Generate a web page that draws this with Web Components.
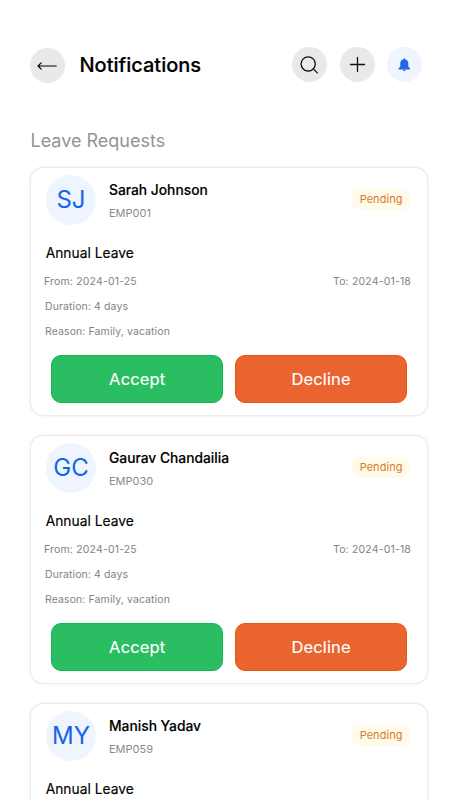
<!DOCTYPE html>
<html lang="en">
<head>
<meta charset="utf-8">
<title>Notifications</title>
<style>
html,body{margin:0;height:800px;overflow:hidden;background:#fff}
body{font-family:Inter,"Liberation Sans",sans-serif;color:#000}
</style>
</head>
<body>
<notifications-page></notifications-page>
<script>
const define = (name, html, setup) => {
  const t = document.createElement('template');
  t.innerHTML = html;
  customElements.define(name, class extends HTMLElement {
    constructor() {
      super();
      this.attachShadow({mode: 'open'}).append(t.content.cloneNode(true));
    }
    connectedCallback() { if (setup) setup(this, this.shadowRoot); }
  });
};

define('icon-button', `<style>
:host{display:flex;width:35px;height:35px;border-radius:50%;background:#e9e9e9;align-items:center;justify-content:center;flex:none}
:host([tone=blue]){background:#eef5ff}
::slotted(svg){display:block}
</style><slot></slot>`);

define('top-bar', `<style>
:host{display:flex;align-items:center;height:36px;padding:47px 27.8px 0 30.4px}
h1{margin:0 0 0 14.1px;font-size:20px;font-weight:500;line-height:36px;flex:1;-webkit-text-stroke:.2px #000}
.actions{display:flex;gap:12.7px;margin-top:-1px}
</style>
<icon-button><svg width="35" height="35" viewBox="0 0 35 35" fill="none" stroke="#000" stroke-width="1.1" stroke-linecap="round" stroke-linejoin="round"><path d="M26.3 18H8M11.2 14.9L8 18l3.2 3.2"/></svg></icon-button>
<h1><slot></slot></h1>
<div class="actions">
<icon-button><svg width="35" height="35" viewBox="0 0 35 35" fill="none" stroke="#111" stroke-width="1.3" stroke-linecap="round"><circle cx="16.2" cy="16.9" r="7.1"/><path d="M21.3 21.9l4 4"/></svg></icon-button>
<icon-button><svg width="35" height="35" viewBox="0 0 35 35" fill="none" stroke="#111" stroke-width="1.3" stroke-linecap="round"><path d="M17.5 10.5v14M10.5 17.5h14"/></svg></icon-button>
<icon-button tone="blue"><svg width="35" height="35" viewBox="0 0 35 35" fill="#2468e5"><path d="M17.3 11.2c.5 0 .8.3.8.8v.3c2 .4 3.2 2 3.2 4v3.2l1.8 2.1v.8H11.5v-.8l1.8-2.1v-3.2c0-2 1.2-3.6 3.2-4V12c0-.5.3-.8.8-.8zM15.9 22.8h2.8c0 .8-.6 1.3-1.4 1.3s-1.4-.5-1.4-1.3z"/></svg></icon-button>
</div>`);

define('section-title', `<style>
:host{display:block;padding:46px 30.5px 0;font-size:18px;line-height:24px;color:#969292}
</style><slot></slot>`);

define('user-avatar', `<style>
:host{display:flex;width:50px;height:50px;border-radius:50%;background:#eef5ff;color:#1565ea;align-items:center;justify-content:center;font-size:24px;line-height:50px;flex:none}
</style><slot></slot>`);

define('status-badge', `<style>
:host{display:block;height:21px;border-radius:11px;background:#fffaea;color:#d67e2c;font-size:11px;line-height:21px;padding:0 8.5px;letter-spacing:.05px}
</style><slot></slot>`);

define('action-button', `<style>
:host{display:block;flex:1;height:48px;box-sizing:border-box;border:1px solid #10b850;border-radius:10px;background:#2bbd62;color:#fff;text-align:center;font-size:16.5px;line-height:46px;-webkit-text-stroke:.15px #fff;letter-spacing:.15px}
:host([kind=decline]){background:#ea6430;border-color:#ea560c}
</style><slot></slot>`);

define('leave-card', `<style>
:host{display:block;box-sizing:border-box;width:396px;height:247px;border-radius:12px;background:#fff;box-shadow:0 0 3px rgba(0,0,0,.22);padding:6.5px 16px 0 15px}
header{display:flex;height:50px}
.who{flex:1;margin-left:13px;padding-top:5px}
.name{font-size:13.8px;font-weight:500;line-height:20px;-webkit-text-stroke:.15px #000}
.id{font-size:11px;line-height:16px;color:#8d8a8a;margin-top:5px}
status-badge{margin-top:14.5px}
.kind{font-size:13.8px;line-height:20px;margin:18px 0 0 -.3px;-webkit-text-stroke:.15px #000}
</style>
<header><user-avatar></user-avatar><div class="who"><div class="name"></div><div class="id"></div></div><status-badge>Pending</status-badge></header>
<div class="kind">Annual Leave</div>
<slot></slot>`,
(el, root) => {
  root.querySelector('user-avatar').textContent = el.getAttribute('initials');
  root.querySelector('.name').textContent = el.getAttribute('name');
  root.querySelector('.id').textContent = el.getAttribute('employee');
});

define('leave-details', `<style>
:host{display:block}
.row{display:flex;justify-content:space-between;font-size:10.5px;line-height:16px;color:#858282;letter-spacing:.1px;margin:9px 0 0 -1px}
.dates{margin:10.5px 0 0 -2px;padding-top:1px;letter-spacing:.17px}
.buttons{display:flex;gap:12px;margin:15.4px 4px 0 5.3px}
</style>
<div class="row dates"><span>From: 2024-01-25</span><span>To: 2024-01-18</span></div>
<div class="row">Duration: 4 days</div>
<div class="row">Reason: Family, vacation</div>
<div class="buttons"><action-button>Accept</action-button><action-button kind="decline">Decline</action-button></div>`);

define('notifications-page', `<style>
:host{display:block;width:450px;height:800px;overflow:hidden;background:#fff}
.list{display:flex;flex-direction:column;gap:21px;padding:15px 0 0 31px}
</style>
<top-bar>Notifications</top-bar>
<section-title>Leave Requests</section-title>
<div class="list">
<leave-card initials="SJ" name="Sarah Johnson" employee="EMP001"><leave-details></leave-details></leave-card>
<leave-card initials="GC" name="Gaurav Chandailia" employee="EMP030"><leave-details></leave-details></leave-card>
<leave-card initials="MY" name="Manish Yadav" employee="EMP059"></leave-card>
</div>`);
</script>
</body>
</html>
